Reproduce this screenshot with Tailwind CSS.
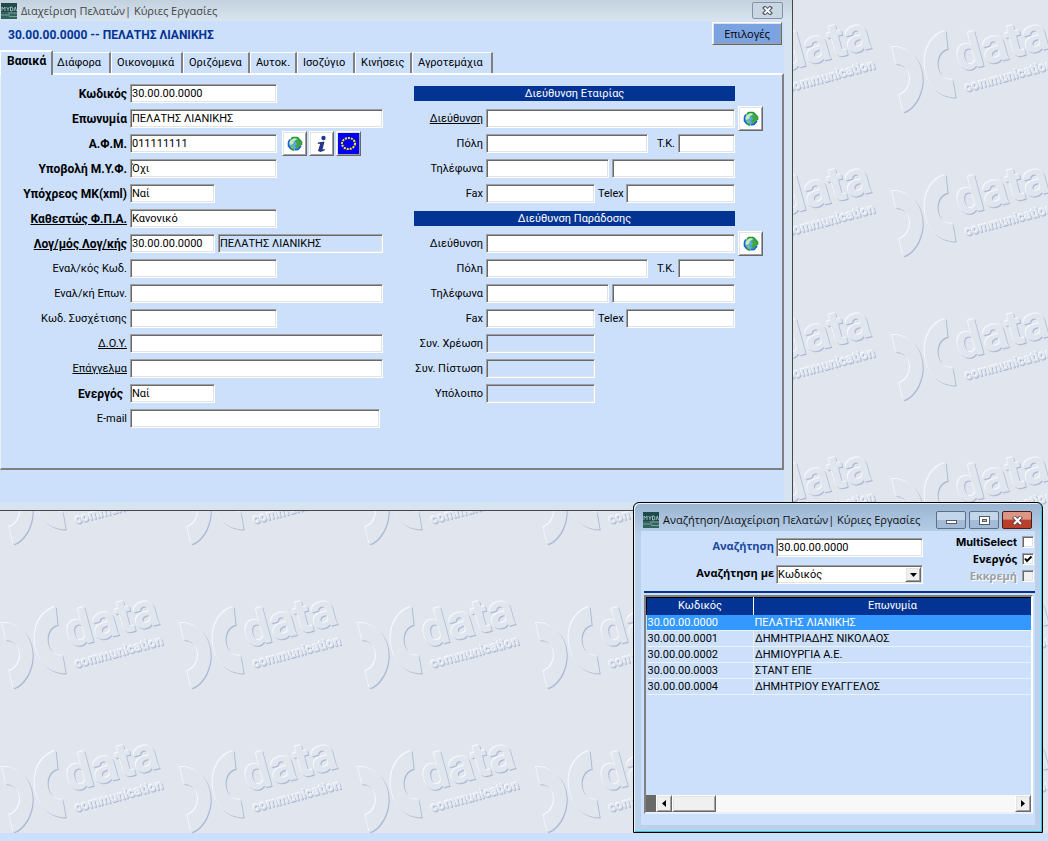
<!DOCTYPE html>
<html lang="el">
<head>
<meta charset="utf-8">
<title>Διαχείριση Πελατών</title>
<script src="https://cdn.jsdelivr.net/npm/@tailwindcss/browser@4"></script>
<style>
.fld{border:1px solid;border-color:#a0a0a0 #fff #fff #a0a0a0;box-shadow:inset 1px 1px 0 #696969,inset -1px -1px 0 #e3e3e3;height:19px;padding:0 1px;background:#fff;color:#000;min-width:0;border-radius:0;outline:none}
.fld.ro{background:#cce0fc}
.btn3d{border:1px solid;border-color:#fff #696969 #696969 #fff;box-shadow:inset 1px 1px 0 #e3e3e3,inset -1px -1px 0 #a0a0a0}
</style>
</head>
<body class="bg-[#cce0fc] text-black font-[Roboto,'Liberation_Sans',sans-serif] text-[11px] leading-4">
<svg class="absolute size-0" aria-hidden="true">
  <defs>
    <symbol id="globe" viewBox="0 0 16 16">
      <circle cx="8" cy="8" r="6.6" fill="#5aa7e6"/>
      <path d="M3 4 L6 2 L10 1.500 L9 4 L7 5 L6 8 L3 9 L2 7Z" fill="#c5ecb4"/>
      <path d="M8 5 L12 3 L14 7 L13 11 L10 13 L8 10 L10 8Z" fill="#44a544"/>
      <path d="M3 10 L6 9 L7 12 L5 13Z" fill="#77c469"/>
      <path d="M4 3 L6 1.500 H10 L12 3" fill="none" stroke="#1d9a26" stroke-width="1.600"/>
      <path d="M12 3 L14.500 6 V9" fill="none" stroke="#2a9b2e" stroke-width="1.600"/>
      <path d="M14 10 L11 13.500 H8 M1.500 6 V10 L4 13 M3 3.500 L1.500 6" fill="none" stroke="#1a62d0" stroke-width="1.600"/>
      <path d="M4 13 L7 14.300" stroke="#2a9b2e" stroke-width="1.600"/>
    </symbol>
    <symbol id="app" viewBox="0 0 16 16">
      <rect width="16" height="16" fill="#1f4a4c"/>
      <rect y="9" width="16" height="7" fill="#31635f"/>
      <path d="M1 8V4l1.500 2L4 4v4M5.500 4l1.500 2 1.500-2M7 6v2M9.500 8V4h1.500l1 2-1 2zM13 8l1.300-4L15.500 8" fill="none" stroke="#b9cfcb" stroke-width=".8"/>
      <path d="M0 12h9M7 10h9M8 13.500h8" stroke="#8fb0a9" stroke-width=".8"/>
    </symbol>
  </defs>
</svg>

<main class="relative h-screen overflow-hidden">
  <div class="absolute inset-x-0 top-0 bottom-2 bg-[#e0e5ee]">
    <svg class="size-full [filter:drop-shadow(-1px_-1px_0_#f6f8fc)_drop-shadow(1px_1px_0_#a9b8d3)]" aria-hidden="true">
      <defs>
        <pattern id="tile" width="178" height="144" patternUnits="userSpaceOnUse">
          <g fill="#e0e5ee">
            <path transform="scale(.333333)" d="M6 140 C60 140 98 180 98 237 C98 290 66 330 40 337 L28 285 C45 280 60 262 60 237 C60 212 42 192 18 193 Z"/>
            <path transform="scale(.333333)" d="M167 92 C130 102 104 140 104 187 C104 250 145 295 197 292 L188 239 C162 242 143 220 143 190 C143 168 155 150 173 147 Z"/>
            <g font-family="Roboto, sans-serif" font-weight="700">
              <text x="70" y="72" font-size="48" transform="rotate(-15 70 72)">data</text>
              <text x="76" y="92" font-size="13" transform="rotate(-15 76 92)">communication</text>
            </g>
          </g>
        </pattern>
      </defs>
      <rect width="100%" height="100%" fill="url(#tile)"/>
    </svg>
  </div>

  <!-- customer card window -->
  <section class="absolute left-0 top-0 w-[793px] border-r border-b border-[#484848] bg-[#d6e4f1] pr-2 pb-2">
    <header class="flex h-[21px] items-center bg-linear-to-b from-[#c3d1de] to-[#d8e5f1] -mr-2 pr-[9px] pl-px">
      <svg class="size-4"><use href="#app"/></svg>
      <h1 class="ml-1 grow font-['Open_Sans',sans-serif] text-[11px] text-[#444]">Διαχείριση Πελατών| Κύριες Εργασίες</h1>
      <button aria-label="Κλείσιμο" class="flex h-[17px] w-[31px] items-center justify-center rounded-xs border border-[#8693a5] bg-[#c9d7e5]">
        <svg class="h-[9px] w-[11px]" viewBox="0 0 11 9"><path d="M1.500 0.500l8 8M9.500 0.500l-8 8" stroke="#555b66" stroke-width="4"/><path d="M2.500 1.500l6 6M8.500 1.500l-6 6" stroke="#fff" stroke-width="1.800"/></svg>
      </button>
    </header>
    <div class="bg-[#cce0fc] pb-8">
      <div class="flex h-[29px] items-start justify-between pr-0.5 pl-2">
        <h2 class="pt-1.5 text-xs font-bold text-[#043493]">30.00.00.0000 -- ΠΕΛΑΤΗΣ ΛΙΑΝΙΚΗΣ</h2>
        <button class="btn3d mt-px h-[23px] w-[70px] bg-[#7ba3e2] font-['Open_Sans',sans-serif] text-[11px]">Επιλογές</button>
      </div>
      <nav class="flex items-end text-[11px]">
        <button class="-mb-0.5 h-[25px] w-[53px] border-t-2 border-l border-r-2 border-t-white border-l-white border-r-[#808080] bg-[#cce0fc] pb-1.5 text-left pl-1.5 text-xs font-bold">Βασικά</button>
        <button class="h-[21px] w-[58px] border-t border-r-2 border-t-white border-r-[#808080] pl-1 text-left">Διάφορα</button>
        <button class="h-[21px] w-[72px] border-t border-r-2 border-l border-t-white border-l-white border-r-[#808080] pl-[5px] text-left">Οικονομικά</button>
        <button class="h-[21px] w-[67px] border-t border-r-2 border-l border-t-white border-l-white border-r-[#808080] pl-[5px] text-left">Οριζόμενα</button>
        <button class="h-[21px] w-[47px] border-t border-r-2 border-l border-t-white border-l-white border-r-[#808080] pl-[5px] text-left">Αυτοκ.</button>
        <button class="h-[21px] w-[58px] border-t border-r-2 border-l border-t-white border-l-white border-r-[#808080] pl-[5px] text-left">Ισοζύγιο</button>
        <button class="h-[21px] w-[57px] border-t border-r-2 border-l border-t-white border-l-white border-r-[#808080] pl-[5px] text-left">Κινήσεις</button>
        <button class="h-[21px] w-[81px] border-t border-r-2 border-l border-t-white border-l-white border-r-[#808080] pl-[5px] text-left">Αγροτεμάχια</button>
      </nav>
      <form class="flex border-t-2 border-r-2 border-b-2 border-l border-t-white border-l-[#f0f0f0] border-r-[#808080] border-b-[#808080] pt-[9px] pb-10">
        <div class="flex w-[413px] flex-col gap-1.5">
          <div class="flex items-center gap-[3px]"><label for="f1" class="w-[126px] text-right text-xs font-bold">Κωδικός</label><input id="f1" class="fld w-[147px]" value="30.00.00.0000"></div>
          <div class="flex items-center gap-[3px]"><label for="f2" class="w-[126px] text-right text-xs font-bold">Επωνυμία</label><input id="f2" class="fld w-[253px]" value="ΠΕΛΑΤΗΣ ΛΙΑΝΙΚΗΣ"></div>
          <div class="flex items-center gap-[3px]"><label for="f3" class="w-[126px] text-right text-xs font-bold">Α.Φ.Μ.</label><input id="f3" class="fld w-[147px]" value="011111111">
            <div class="-my-[3px] ml-0.5 flex gap-0.5">
              <button type="button" aria-label="Ιστός" class="btn3d flex size-[25px] items-center justify-center bg-white"><svg class="size-4"><use href="#globe"/></svg></button>
              <button type="button" aria-label="Πληροφορίες" class="btn3d flex size-[25px] items-center justify-center bg-white"><svg class="h-[18px] w-3" viewBox="0 0 12 18" fill="#26358c"><circle cx="7.500" cy="3" r="2.200"/><path d="M2 7.500 L8.500 6.500 L6.500 14.500 L9 14 L8.500 15.500 L4.500 17 L2 16 L4.200 8.800 L1.700 9Z"/></svg></button>
              <button type="button" aria-label="VIES" class="btn3d flex size-[25px] items-center justify-center bg-white"><svg class="size-[21px]" viewBox="0 0 21 21"><rect width="21" height="21" fill="#0000f0"/><ellipse cx="10.500" cy="10.500" rx="6.500" ry="5.500" fill="none" stroke="#ffee00" stroke-width="2" stroke-dasharray="2 1"/></svg></button>
            </div></div>
          <div class="flex items-center gap-[3px]"><label for="f4" class="w-[126px] text-right text-xs font-bold">Υποβολή Μ.Υ.Φ.</label><input id="f4" class="fld w-[147px]" value="Όχι"></div>
          <div class="flex items-center gap-[3px]"><label for="f5" class="w-[126px] text-right text-xs font-bold">Υπόχρεος ΜΚ(xml)</label><input id="f5" class="fld w-[85px]" value="Ναί"></div>
          <div class="flex items-center gap-[3px]"><label for="f6" class="w-[126px] text-right text-xs font-bold underline">Καθεστώς Φ.Π.Α.</label><input id="f6" class="fld w-[147px]" value="Κανονικό"></div>
          <div class="flex items-center gap-[3px]"><label for="f7" class="w-[126px] text-right text-xs font-bold underline">Λογ/μός Λογ/κής</label><input id="f7" class="fld w-[85px]" value="30.00.00.0000"><input aria-label="Όνομα λογαριασμού" readonly class="fld ro w-[165px]" value="ΠΕΛΑΤΗΣ ΛΙΑΝΙΚΗΣ"></div>
          <div class="flex items-center gap-[3px]"><label for="f8" class="w-[126px] text-right">Εναλ/κός Κωδ.</label><input id="f8" class="fld w-[147px]"></div>
          <div class="flex items-center gap-[3px]"><label for="f9" class="w-[126px] text-right">Εναλ/κή Επων.</label><input id="f9" class="fld w-[253px]"></div>
          <div class="flex items-center gap-[3px]"><label for="f10" class="w-[126px] text-right">Κωδ. Συσχέτισης</label><input id="f10" class="fld w-[147px]"></div>
          <div class="flex items-center gap-[3px]"><label for="f11" class="w-[126px] text-right underline">Δ.Ο.Υ.</label><input id="f11" class="fld w-[253px]"></div>
          <div class="flex items-center gap-[3px]"><label for="f12" class="w-[126px] text-right underline">Επάγγελμα</label><input id="f12" class="fld w-[253px]"></div>
          <div class="flex items-center gap-[3px]"><label for="f13" class="w-[126px] pr-1 text-right text-xs font-bold">Ενεργός</label><input id="f13" class="fld w-[85px]" value="Ναί"></div>
          <div class="flex items-center gap-[3px]"><label for="f14" class="w-[126px] text-right">E-mail</label><input id="f14" class="fld w-[250px]"></div>
        </div>
        <div class="flex w-[350px] flex-col gap-1.5">
          <h3 class="my-0.5 mr-[29px] h-[15px] bg-[#043493] text-center text-[11px] leading-[15px] text-white">Διεύθυνση Εταιρίας</h3>
          <div class="flex items-center gap-[3px]"><label for="a1" class="w-[69px] text-right underline">Διεύθυνση</label><input id="a1" class="fld w-[249px]"><button type="button" aria-label="Χάρτης" class="btn3d -my-[3px] flex size-[25px] items-center justify-center bg-white"><svg class="size-4"><use href="#globe"/></svg></button></div>
          <div class="flex items-center gap-[3px]"><label for="a2" class="w-[69px] text-right">Πόλη</label><input id="a2" class="fld w-[162px]"><label for="a3" class="w-[24px] text-right">Τ.Κ.</label><input id="a3" class="fld w-[57px]"></div>
          <div class="flex items-center gap-[3px]"><label for="a4" class="w-[69px] text-right">Τηλέφωνα</label><input id="a4" class="fld w-[123px]"><input aria-label="Τηλέφωνο 2" class="fld w-[123px]"></div>
          <div class="flex items-center gap-[3px]"><label for="a5" class="w-[69px] text-right">Fax</label><input id="a5" class="fld w-[109px]"><label for="a6" class="w-[25px]">Telex</label><input id="a6" class="fld w-[109px]"></div>
          <h3 class="my-0.5 mr-[29px] h-[15px] bg-[#043493] text-center text-[11px] leading-[15px] text-white">Διεύθυνση Παράδοσης</h3>
          <div class="flex items-center gap-[3px]"><label for="b1" class="w-[69px] text-right">Διεύθυνση</label><input id="b1" class="fld w-[249px]"><button type="button" aria-label="Χάρτης" class="btn3d -my-[3px] flex size-[25px] items-center justify-center bg-white"><svg class="size-4"><use href="#globe"/></svg></button></div>
          <div class="flex items-center gap-[3px]"><label for="b2" class="w-[69px] text-right">Πόλη</label><input id="b2" class="fld w-[162px]"><label for="b3" class="w-[24px] text-right">Τ.Κ.</label><input id="b3" class="fld w-[57px]"></div>
          <div class="flex items-center gap-[3px]"><label for="b4" class="w-[69px] text-right">Τηλέφωνα</label><input id="b4" class="fld w-[123px]"><input aria-label="Τηλέφωνο 2" class="fld w-[123px]"></div>
          <div class="flex items-center gap-[3px]"><label for="b5" class="w-[69px] text-right">Fax</label><input id="b5" class="fld w-[109px]"><label for="b6" class="w-[25px]">Telex</label><input id="b6" class="fld w-[109px]"></div>
          <div class="flex items-center gap-[3px]"><label for="c1" class="w-[69px] text-right">Συν. Χρέωση</label><input id="c1" readonly class="fld ro w-[109px]"></div>
          <div class="flex items-center gap-[3px]"><label for="c2" class="w-[69px] text-right">Συν. Πίστωση</label><input id="c2" readonly class="fld ro w-[109px]"></div>
          <div class="flex items-center gap-[3px]"><label for="c3" class="w-[69px] text-right">Υπόλοιπο</label><input id="c3" readonly class="fld ro w-[109px]"></div>
        </div>
      </form>
    </div>
  </section>

  <!-- search window -->
  <section class="absolute top-[502px] left-[633px] w-[410px] rounded-t-md border border-black bg-[#b9d1ea] bg-linear-to-b from-[#9ab4d1] to-[#b9d1ea] to-10% px-[7px] pb-[7px] shadow-[inset_1px_1px_0_#e8f4fc,inset_-1px_-1px_0_#36c5d8]">
    <header class="flex h-7 items-center gap-[3px] pt-1.5 pr-[3px] pl-0.5">
      <svg class="size-4 shrink-0"><use href="#app"/></svg>
      <h2 class="ml-px min-w-0 grow font-['Open_Sans',sans-serif] text-[11px] whitespace-nowrap text-[#111]">Αναζήτηση/Διαχείριση Πελατών| Κύριες Εργασίες</h2>
      <button aria-label="Ελαχιστοποίηση" class="flex h-[18px] w-[30px] shrink-0 items-center justify-center rounded-xs border border-[#5c6f88] bg-linear-to-b from-[#c3d5e8] from-50% to-[#a3bbd6] to-50%"><svg class="h-[9px] w-[11px]"><rect x="0.500" y="4.500" width="10" height="3" fill="#fff" stroke="#555b66"/></svg></button>
      <button aria-label="Μεγιστοποίηση" class="flex h-[18px] w-[30px] shrink-0 items-center justify-center rounded-xs border border-[#5c6f88] bg-linear-to-b from-[#c3d5e8] from-50% to-[#a3bbd6] to-50%"><svg class="h-[9px] w-[11px]"><rect x="0.500" y="0.500" width="10" height="8" fill="#fff" stroke="#555b66"/><rect x="3.500" y="3.500" width="4" height="2" fill="#a9c0da" stroke="#555b66"/></svg></button>
      <button aria-label="Κλείσιμο" class="flex h-[18px] w-[30px] shrink-0 items-center justify-center rounded-xs border border-[#4b1c1c] bg-linear-to-b from-[#dd9585] from-45% to-[#b8402a] to-50%"><svg class="h-[9px] w-[11px]" viewBox="0 0 11 9"><path d="M1.500 0.500l8 8M9.500 0.500l-8 8" stroke="#5b4048" stroke-width="4"/><path d="M2 1l7 7M9 1l-7 7" stroke="#fff" stroke-width="2.200"/></svg></button>
    </header>
    <div class="bg-[#cce0fc] pb-[11px]">
      <div class="flex h-[60px] pt-[3px]">
        <div class="flex w-[282px] flex-col gap-2 pt-1">
          <div class="flex items-center justify-end gap-0.5"><label for="q" class="pb-1 font-['Open_Sans',sans-serif] leading-[15px] font-bold text-[#1d4a9e]">Αναζήτηση</label><input id="q" class="fld w-[147px]" value="30.00.00.0000"></div>
          <div class="flex items-center justify-end gap-0.5"><label for="by" class="pb-1 font-['Open_Sans',sans-serif] leading-[15px] font-bold">Αναζήτηση με</label>
            <div class="relative flex w-[147px]">
              <select id="by" class="fld w-full appearance-none"><option>Κωδικός</option></select>
              <span class="btn3d pointer-events-none absolute top-0.5 right-0.5 flex h-[15px] w-4 items-center justify-center bg-[#f0f0f0]"><svg class="h-1 w-[7px]"><path d="M0 0h7L3.500 4z"/></svg></span>
            </div></div>
        </div>
        <div class="flex grow flex-col gap-px pr-px font-['Open_Sans',sans-serif] text-[11px] font-bold">
          <label class="flex h-4 items-center justify-end gap-[5px] font-[Inter,sans-serif]">MultiSelect<input type="checkbox" class="fld !size-3 appearance-none !p-0"></label>
          <label class="flex h-4 items-center justify-end gap-[5px]">Ενεργός<span class="relative flex"><input type="checkbox" checked class="fld !size-3 appearance-none !p-0"><svg class="pointer-events-none absolute inset-0 size-3" viewBox="0 0 12 12"><path d="M3 5.500l2 2.500 4.500-4.500" fill="none" stroke="#000" stroke-width="2"/></svg></span></label>
          <label class="flex h-4 items-center justify-end gap-[5px] text-[#a0a0a0] [text-shadow:1px_1px_0_#fff]">Εκκρεμή<input type="checkbox" disabled class="fld !size-3 appearance-none !bg-[#f0f0f0] !p-0"></label>
        </div>
      </div>
      <div class="ml-[3px] h-0.5 bg-[#043493]"></div>
      <div class="mt-0.5 mr-0.5 ml-[3px] flex h-[219px] flex-col border-2 border-t-[#808080] border-r-white border-b-[#e8f0fa] border-l-[#808080]">
        <table class="w-full table-fixed border-collapse">
          <colgroup><col class="w-[107px]"><col></colgroup>
          <thead><tr class="h-[17px] bg-[#043493] text-white"><th class="border-t border-r border-l border-t-black border-r-white border-l-black p-0 text-center leading-4 font-normal">Κωδικός</th><th class="border-t border-t-black p-0 text-center leading-4 font-normal">Επωνυμία</th></tr></thead>
          <tbody>
            <tr class="h-4 bg-[#3399ff] text-white"><td class="border-b border-[#eaf2fc] p-0 pl-px leading-[15px]">30.00.00.0000</td><td class="border-b border-[#eaf2fc] p-0 pl-px leading-[15px]">ΠΕΛΑΤΗΣ ΛΙΑΝΙΚΗΣ</td></tr>
            <tr class="h-4"><td class="border-r border-b border-[#eaf2fc] p-0 pl-px leading-[15px]">30.00.00.0001</td><td class="border-b border-[#eaf2fc] p-0 pl-px leading-[15px]">ΔΗΜΗΤΡΙΑΔΗΣ ΝΙΚΟΛΑΟΣ</td></tr>
            <tr class="h-4"><td class="border-r border-b border-[#eaf2fc] p-0 pl-px leading-[15px]">30.00.00.0002</td><td class="border-b border-[#eaf2fc] p-0 pl-px leading-[15px]">ΔΗΜΙΟΥΡΓΙΑ Α.Ε.</td></tr>
            <tr class="h-4"><td class="border-r border-b border-[#eaf2fc] p-0 pl-px leading-[15px]">30.00.00.0003</td><td class="border-b border-[#eaf2fc] p-0 pl-px leading-[15px]">ΣΤΑΝΤ ΕΠΕ</td></tr>
            <tr class="h-4"><td class="border-r border-b border-[#eaf2fc] p-0 pl-px leading-[15px]">30.00.00.0004</td><td class="border-b border-[#eaf2fc] p-0 pl-px leading-[15px]">ΔΗΜΗΤΡΙΟΥ ΕΥΑΓΓΕΛΟΣ</td></tr>
          </tbody>
        </table>
        <div class="mt-auto flex h-[17px] bg-[#f8f8f8]">
          <span class="w-2.5 bg-[#696969]"></span>
          <button aria-label="Αριστερά" class="btn3d flex w-4 items-center justify-center bg-[#f0f0f0]"><svg class="h-[7px] w-1"><path d="M4 0v7L0 3.500z"/></svg></button>
          <span class="btn3d w-11 bg-[#f0f0f0]"></span>
          <button aria-label="Δεξιά" class="btn3d ml-auto flex w-4 items-center justify-center bg-[#f0f0f0]"><svg class="h-[7px] w-1"><path d="M0 0v7l4-3.500z"/></svg></button>
        </div>
      </div>
    </div>
  </section>
</main>
</body>
</html>
